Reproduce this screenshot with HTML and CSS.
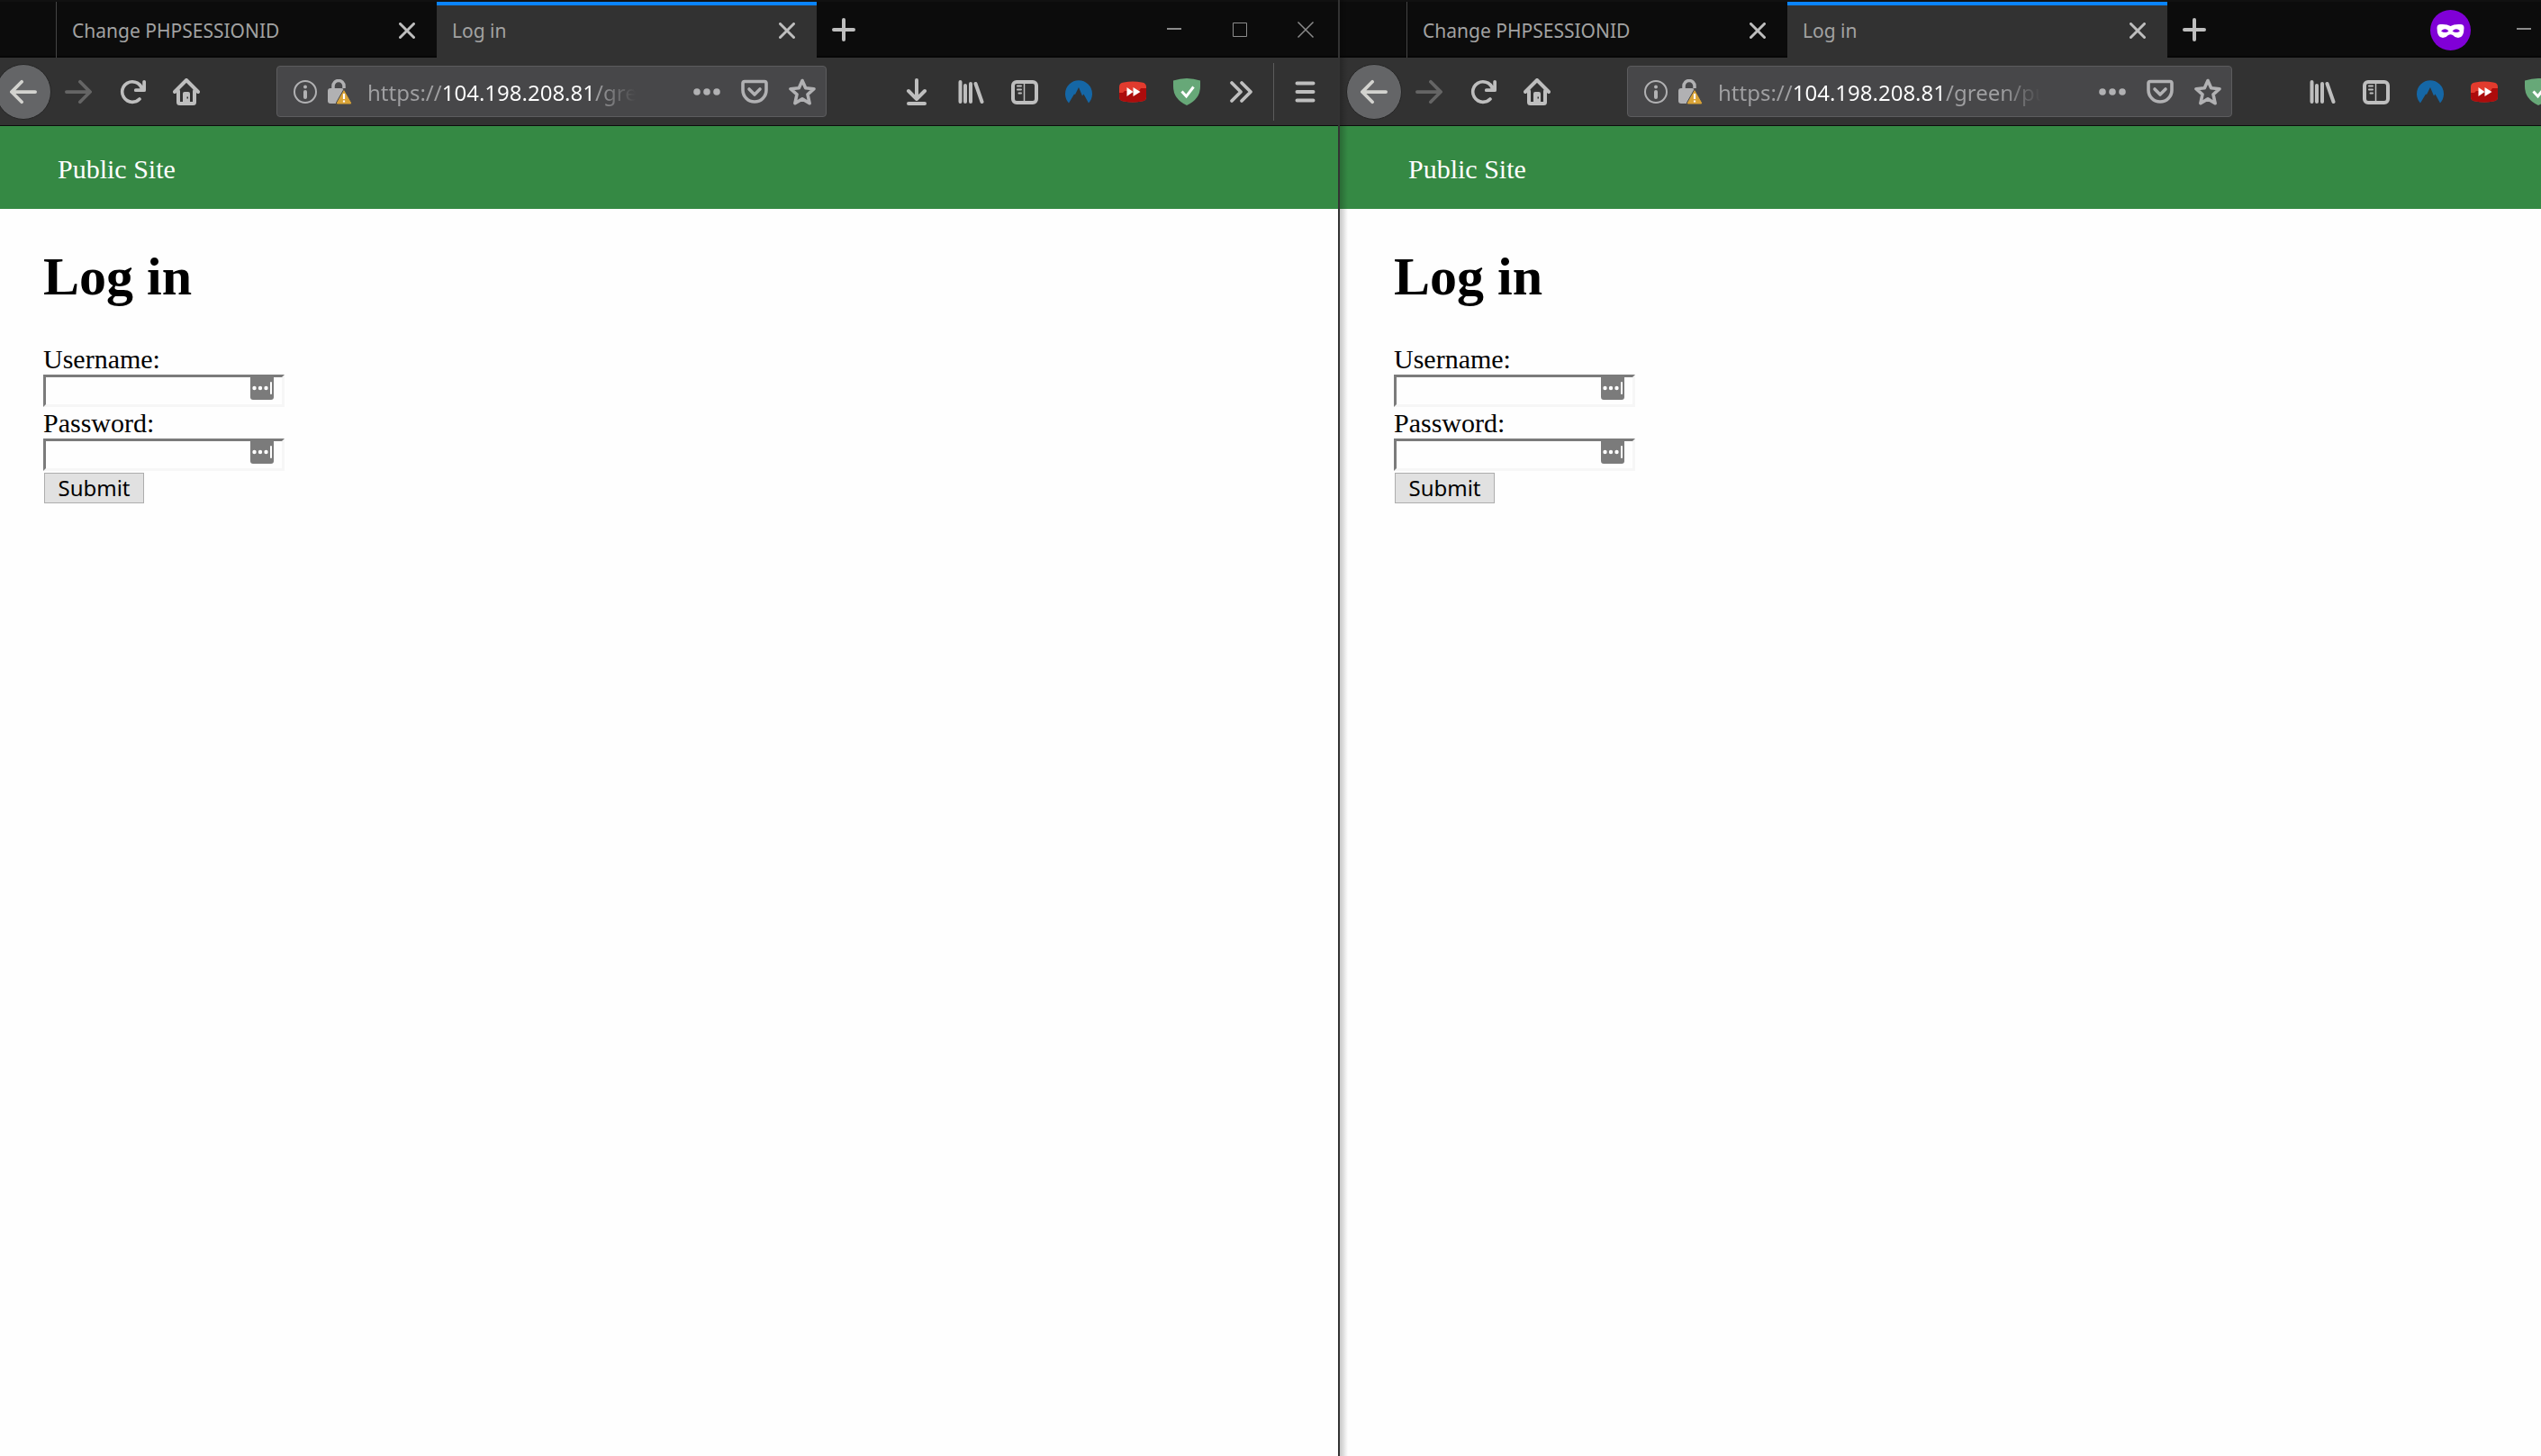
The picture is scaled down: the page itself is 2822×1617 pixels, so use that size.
FILE: index.html
```html
<!DOCTYPE html>
<html lang="en">
<head>
<meta charset="utf-8">
<title>Log in</title>
<link rel="stylesheet" href="styles.css">
</head>
<body>
<svg class="sprite" aria-hidden="true">
  <symbol id="close" viewBox="0 0 18 18"><path d="M1.5 1.5l15 15M16.5 1.5l-15 15" fill="none" stroke="currentColor" stroke-width="3" stroke-linecap="round"/></symbol>
  <symbol id="plus" viewBox="0 0 26 26"><path d="M13 2v22M2 13h22" fill="none" stroke="currentColor" stroke-width="4" stroke-linecap="round"/></symbol>
  <symbol id="back" viewBox="0 0 16 16"><path fill="currentColor" d="M15 7H3.414l4.293-4.293a1 1 0 0 0-1.414-1.414l-6 6a1 1 0 0 0 0 1.414l6 6a1 1 0 0 0 1.414-1.414L3.414 9H15a1 1 0 0 0 0-2z"/></symbol>
  <symbol id="forward" viewBox="0 0 16 16"><path fill="currentColor" d="M15.707 7.293l-6-6a1 1 0 0 0-1.414 1.414L12.586 7H1a1 1 0 0 0 0 2h11.586l-4.293 4.293a1 1 0 1 0 1.414 1.414l6-6a1 1 0 0 0 0-1.414z"/></symbol>
  <symbol id="reload" viewBox="0 0 16 16"><path fill="currentColor" d="M15 1a1 1 0 0 0-1 1v2.418A6.995 6.995 0 1 0 8 15a6.954 6.954 0 0 0 4.95-2.05 1 1 0 0 0-1.414-1.414A5.019 5.019 0 1 1 12.549 6H10a1 1 0 0 0 0 2h5a1 1 0 0 0 1-1V2a1 1 0 0 0-1-1z"/></symbol>
  <symbol id="home" viewBox="0 0 30 30"><path d="M2 15L15 2l13 13M6 14v12.500q0 1.500 1.500 1.500h15q1.500 0 1.500-1.500V14" fill="none" stroke="currentColor" stroke-width="4" stroke-linecap="round" stroke-linejoin="round"/><path d="M11 28v-11q0-2 2-2h4q2 0 2 2v11z" fill="currentColor"/><path d="M15.500 20.500h1.500v2h-1.500z" fill="#323232"/></symbol>
  <symbol id="info" viewBox="0 0 26 26"><circle cx="13" cy="13" r="12" fill="none" stroke="currentColor" stroke-width="2"/><circle cx="13" cy="7.500" r="2" fill="currentColor"/><path d="M13 13v6" stroke="currentColor" stroke-width="4" stroke-linecap="round"/></symbol>
  <symbol id="lock" viewBox="0 0 27 28"><path d="M6 12V7.500a6 6 0 0 1 12 0V10" fill="none" stroke="currentColor" stroke-width="3.500"/><rect y="10" width="18" height="17" rx="3" fill="currentColor"/><path d="M18 11L26.500 26q.6 2-1.500 2h-14q-2.100 0-1.500-2z" fill="#d9a336" stroke="#474749" stroke-width="1"/><path d="M18 16v6M18 23.500v2" stroke="#fff" stroke-width="2.200"/></symbol>
  <symbol id="dots" viewBox="0 0 30 30"><g fill="currentColor"><circle cx="4" cy="15" r="3.800"/><circle cx="15" cy="15" r="3.800"/><circle cx="26" cy="15" r="3.800"/></g></symbol>
  <symbol id="pocket" viewBox="0 0 30 30"><path d="M4 3.500h22q2 0 2 2V13a13 13 0 0 1-26 0V5.500q0-2 2-2z" fill="none" stroke="currentColor" stroke-width="3.600"/><path d="M9 12l6 6 6-6" fill="none" stroke="currentColor" stroke-width="3.600" stroke-linecap="round" stroke-linejoin="round"/></symbol>
  <symbol id="star" viewBox="0 0 30 30"><path d="M15 2.500l3.700 8.300 9.300.9-7 6.100 2.100 9.900L15 22.900l-8.100 4.800L9 17.800l-7-6.100 9.300-.9z" fill="none" stroke="currentColor" stroke-width="3.600" stroke-linejoin="round"/></symbol>
  <symbol id="download" viewBox="0 0 30 30"><path d="M15 2v21M6 14l9 9 9-9M6 28h18" fill="none" stroke="currentColor" stroke-width="4" stroke-linecap="round" stroke-linejoin="round"/></symbol>
  <symbol id="library" viewBox="0 0 30 30"><path d="M3.500 4v22M9 8v18M15 6v20M20.500 6l7 20" fill="none" stroke="currentColor" stroke-width="4" stroke-linecap="round"/></symbol>
  <symbol id="sidebar" viewBox="0 0 30 30"><rect x="2" y="4" width="26" height="23" rx="4" fill="none" stroke="currentColor" stroke-width="4"/><path d="M14.500 5v21" stroke="currentColor" stroke-width="1.500"/><path d="M7 8.500h4M7 12.500h4M8.500 16.500h2.500" stroke="currentColor" stroke-width="2" stroke-linecap="round"/></symbol>
  <symbol id="peak" viewBox="0 0 30 30"><path d="M4 27.500A15 15 0 1 1 26 27.500L20.500 17.500l-1.500 2-4-9.500-4 8-1-.5z" fill="#1567a6"/></symbol>
  <symbol id="skip" viewBox="0 0 30 30"><path d="M5 4.500q10-2 20 0 5 .5 5 5v11q0 4.500-5 5-10 2-20 0-5-.5-5-5v-11q0-4.500 5-5z" fill="#e23b2e"/><path d="M0 16h4l2-2h16l2-3h6v9.500q0 4.500-5 5-10 2-20 0-5-.5-5-5z" fill="#ac0c0c"/><path d="M8.500 10l7 5-7 5zM15.500 10l8 5-8 5z" fill="#fff"/></symbol>
  <symbol id="shield" viewBox="0 0 30 30"><path d="M0 2.500Q15-2.500 30 2.500V9q0 14-15 21Q0 23 0 9z" fill="#67a878"/><path d="M9.500 14.500l5 5.500 8-10.500" fill="none" stroke="#fff" stroke-width="3"/></symbol>
  <symbol id="more" viewBox="0 0 30 30"><path d="M5 5l10 10L5 25M16 5l10 10-10 10" fill="none" stroke="currentColor" stroke-width="3.800" stroke-linecap="round" stroke-linejoin="round"/></symbol>
  <symbol id="menu" viewBox="0 0 30 30"><path d="M6.500 5.500h18M6.500 15h18M6.500 24.500h18" stroke="currentColor" stroke-width="4" stroke-linecap="round"/></symbol>
  <symbol id="min" viewBox="0 0 20 20"><path d="M2 9h16" stroke="currentColor" stroke-width="2"/></symbol>
  <symbol id="max" viewBox="0 0 20 20"><path d="M2.500 2.500h15v15h-15z" fill="none" stroke="currentColor"/></symbol>
  <symbol id="quit" viewBox="0 0 20 20"><path d="M1.500 1.500l17 17M18.500 1.500l-17 17" stroke="currentColor" stroke-width="1.500"/></symbol>
  <symbol id="mask" viewBox="0 0 45 45"><circle cx="22.500" cy="22.500" r="22.500" fill="#8000d7"/><path fill-rule="evenodd" fill="#fff" d="M7.500 20q0-4 4-4 7-.5 11 2 4-2.500 11-2 4 0 4 4 0 11-6.500 11-3.500 0-6-3-2.500-1.500-5 0-2.500 3-6 3-6.500 0-6.500-11zM12 23.500q4.500 3 8.500 0-4-4.500-8.500 0zM24.500 23.500q4.500 3 8.500 0-4-4.500-8.500 0z"/></symbol>
  <symbol id="vault" viewBox="0 0 26 25"><path d="M0 0h26v22q0 3-3 3H3q-3 0-3-3z" fill="#7b7b7b"/><g fill="#fff"><circle cx="4.500" cy="12" r="2.200"/><circle cx="11" cy="12" r="2.200"/><circle cx="17.500" cy="12" r="2.200"/></g><path d="M23 6v12" stroke="#fff" stroke-width="2" stroke-linecap="round"/></symbol>
</svg>

<div class="desktop">
  <section class="window">
    <header class="chrome">
      <div class="tabstrip">
        <div class="tab-stub"></div>
        <div class="tab"><span class="tab-title">Change PHPSESSIONID</span><button class="tab-close" aria-label="Close tab"><svg><use href="#close"/></svg></button></div>
        <div class="tab tab--active"><span class="tab-title">Log in</span><button class="tab-close" aria-label="Close tab"><svg><use href="#close"/></svg></button></div>
        <button class="tool new-tab" aria-label="New tab"><svg><use href="#plus"/></svg></button>
        <div class="caption">
          <button class="caption-button" aria-label="Minimize"><svg><use href="#min"/></svg></button>
          <button class="caption-button" aria-label="Maximize"><svg><use href="#max"/></svg></button>
          <button class="caption-button" aria-label="Close window"><svg><use href="#quit"/></svg></button>
        </div>
      </div>
      <nav class="toolbar">
        <button class="back" aria-label="Back"><svg><use href="#back"/></svg></button>
        <button class="tool tool--disabled" aria-label="Forward"><svg><use href="#forward"/></svg></button>
        <button class="tool" aria-label="Reload"><svg><use href="#reload"/></svg></button>
        <button class="tool" aria-label="Home"><svg><use href="#home"/></svg></button>
        <div class="urlbar">
          <svg class="info"><use href="#info"/></svg>
          <svg class="lock"><use href="#lock"/></svg>
          <input class="url" type="text" aria-label="Address" value="https://104.198.208.81/green/public">
          <button class="page-action" aria-label="Page actions"><svg><use href="#dots"/></svg></button>
          <button class="page-action" aria-label="Save to Pocket"><svg><use href="#pocket"/></svg></button>
          <button class="page-action" aria-label="Bookmark"><svg><use href="#star"/></svg></button>
        </div>
        <button class="tool" aria-label="Downloads"><svg><use href="#download"/></svg></button>
        <button class="tool" aria-label="Library"><svg><use href="#library"/></svg></button>
        <button class="tool" aria-label="Sidebars"><svg><use href="#sidebar"/></svg></button>
        <button class="tool" aria-label="VPN"><svg><use href="#peak"/></svg></button>
        <button class="tool" aria-label="Video enhancer"><svg><use href="#skip"/></svg></button>
        <button class="tool" aria-label="Ad blocker"><svg><use href="#shield"/></svg></button>
        <button class="tool" aria-label="More tools"><svg><use href="#more"/></svg></button>
        <button class="tool tool--menu" aria-label="Menu"><svg><use href="#menu"/></svg></button>
      </nav>
    </header>
    <nav class="site-nav"><a href="#">Public Site</a></nav>
    <main class="page">
      <h1>Log in</h1>
      <form>
        <label for="user-a">Username:</label>
        <div class="field"><input id="user-a" type="text"><svg class="vault"><use href="#vault"/></svg></div>
        <label for="pass-a">Password:</label>
        <div class="field"><input id="pass-a" type="password"><svg class="vault"><use href="#vault"/></svg></div>
        <button class="submit" type="submit">Submit</button>
      </form>
    </main>
  </section>

  <section class="window window--private">
    <header class="chrome">
      <div class="tabstrip">
        <div class="tab-stub"></div>
        <div class="tab"><span class="tab-title">Change PHPSESSIONID</span><button class="tab-close" aria-label="Close tab"><svg><use href="#close"/></svg></button></div>
        <div class="tab tab--active"><span class="tab-title">Log in</span><button class="tab-close" aria-label="Close tab"><svg><use href="#close"/></svg></button></div>
        <button class="tool new-tab" aria-label="New tab"><svg><use href="#plus"/></svg></button>
        <div class="caption">
          <svg class="private-badge"><use href="#mask"/></svg>
          <button class="caption-button" aria-label="Minimize"><svg><use href="#min"/></svg></button>
        </div>
      </div>
      <nav class="toolbar">
        <button class="back" aria-label="Back"><svg><use href="#back"/></svg></button>
        <button class="tool tool--disabled" aria-label="Forward"><svg><use href="#forward"/></svg></button>
        <button class="tool" aria-label="Reload"><svg><use href="#reload"/></svg></button>
        <button class="tool" aria-label="Home"><svg><use href="#home"/></svg></button>
        <div class="urlbar">
          <svg class="info"><use href="#info"/></svg>
          <svg class="lock"><use href="#lock"/></svg>
          <input class="url" type="text" aria-label="Address" value="https://104.198.208.81/green/public">
          <button class="page-action" aria-label="Page actions"><svg><use href="#dots"/></svg></button>
          <button class="page-action" aria-label="Save to Pocket"><svg><use href="#pocket"/></svg></button>
          <button class="page-action" aria-label="Bookmark"><svg><use href="#star"/></svg></button>
        </div>
        <button class="tool" aria-label="Library"><svg><use href="#library"/></svg></button>
        <button class="tool" aria-label="Sidebars"><svg><use href="#sidebar"/></svg></button>
        <button class="tool" aria-label="VPN"><svg><use href="#peak"/></svg></button>
        <button class="tool" aria-label="Video enhancer"><svg><use href="#skip"/></svg></button>
        <button class="tool" aria-label="Ad blocker"><svg><use href="#shield"/></svg></button>
      </nav>
    </header>
    <nav class="site-nav"><a href="#">Public Site</a></nav>
    <main class="page">
      <h1>Log in</h1>
      <form>
        <label for="user-b">Username:</label>
        <div class="field"><input id="user-b" type="text"><svg class="vault"><use href="#vault"/></svg></div>
        <label for="pass-b">Password:</label>
        <div class="field"><input id="pass-b" type="password"><svg class="vault"><use href="#vault"/></svg></div>
        <button class="submit" type="submit">Submit</button>
      </form>
    </main>
  </section>
</div>
</body>
</html>
```
FILE: styles.css
```css
* {
  box-sizing: border-box;
}

body {
  margin: 0;
  background: #fefefe;
  color: #000;
  font: 30px/35px "Liberation Serif", serif;
}

button {
  margin: 0;
  padding: 0;
  border: 0;
  background: none;
  color: inherit;
}

svg {
  display: block;
  flex: none;
}

.sprite {
  position: absolute;
  width: 0;
  height: 0;
}

.desktop {
  display: grid;
  grid-template-columns: minmax(0, 1488fr) minmax(0, 1334fr);
  min-height: 100vh;
}

.window {
  --inset: 0px;
  overflow: hidden;
  border-right: 2px solid #333;
}

/* The private window runs past the right edge of the screen. */
.window--private {
  --inset: 12px;
  position: relative;
  border-right: 0;
}

.window--private .chrome {
  margin-right: -27px;
}

.window--private::before {
  content: "";
  position: absolute;
  inset: 0 auto 0 0;
  width: 9px;
  background: linear-gradient(90deg, rgba(0, 0, 0, .22), transparent);
}

.chrome {
  color: #bebebe;
  font-family: "Noto Sans", sans-serif;
}

.tabstrip {
  display: flex;
  height: 64px;
  padding-left: var(--inset);
  border-top: 2px solid #111;
  background: #0c0c0c;
  box-shadow: inset 0 -2px #060606;
}

.tab-stub {
  flex: none;
  width: 63px;
  border-right: 1px solid #444;
}

.tab {
  display: flex;
  flex: 0 1 422px;
  align-items: center;
  justify-content: space-between;
  min-width: 0;
  padding: 2px 24px 0 17px;
}

.tab--active {
  padding: 0 24px 2px 17px;
  border-top: 4px solid #0a84ff;
  background: #323232;
}

.tab-title {
  color: #a2a2a2;
  font-size: 21px;
  line-height: 30px;
  white-space: nowrap;
}

.tab-close svg {
  width: 18px;
  height: 18px;
}

.tool {
  display: flex;
  flex: none;
  align-items: center;
  justify-content: center;
  width: 60px;
}

.tool svg {
  width: 30px;
  height: 30px;
}

.new-tab svg {
  width: 26px;
  height: 26px;
}

.caption {
  display: flex;
  align-items: center;
  margin-left: auto;
  color: #8c8c8c;
}

.caption-button {
  display: grid;
  place-items: center;
  width: 73px;
  height: 60px;
}

.caption-button svg {
  width: 20px;
  height: 20px;
}

.private-badge {
  width: 45px;
  height: 45px;
  margin-right: 22px;
}

.window--private .caption {
  margin-right: 10px;
}

.toolbar {
  display: flex;
  align-items: center;
  height: 76px;
  padding-left: var(--inset);
  border-bottom: 1px solid #0c0c0c;
  background: #323232;
}

.back {
  display: grid;
  flex: none;
  place-items: center;
  width: 62px;
  height: 62px;
  margin-left: -5px;
  border: 1px solid #252525;
  border-radius: 50%;
  background: #646567;
  color: #d3d3cf;
}

.back svg {
  width: 30px;
  height: 30px;
}

.tool--disabled {
  color: #656565;
}

.urlbar {
  display: flex;
  flex: 1;
  align-items: center;
  min-width: 0;
  height: 57px;
  margin: 0 70px;
  padding-left: 18px;
  border: 1px solid #5c5c5e;
  border-radius: 4px;
  background: #474749;
  color: #b1b1b3;
}

.info {
  width: 26px;
  height: 26px;
  margin-right: 12px;
}

.lock {
  width: 27px;
  height: 28px;
}

/* The host is lit, the rest of the address is dim and fades out at the end. */
.url {
  flex: 1;
  min-width: 0;
  height: 40px;
  margin: 2px 52px 0 17px;
  padding: 0;
  border: 0;
  outline: 0;
  background: linear-gradient(90deg, #a0a0a2 84px, #fff 84px 250px, #a0a0a2 250px calc(100% - 44px), transparent);
  background-clip: text;
  color: transparent;
  font: 24px/34px "Noto Sans", sans-serif;
}

.page-action {
  display: grid;
  flex: none;
  place-items: center;
  width: 53px;
  height: 53px;
}

.page-action svg {
  width: 30px;
  height: 30px;
}

.tool--menu {
  width: 72px;
  height: 64px;
  margin-left: 6px;
  padding-right: 4px;
  border-left: 1px solid #5c5c5c;
}

.site-nav {
  padding: 31px 64px 27px calc(var(--inset) + 64px);
  background: #358944;
  line-height: 34px;
}

.site-nav a {
  color: #fff;
  text-decoration: none;
}

.page {
  padding: 41px 48px 48px calc(var(--inset) + 48px);
}

h1 {
  margin: 0 0 40px;
  font-size: 60px;
  line-height: 68px;
}

label {
  display: block;
}

.field {
  position: relative;
  width: 268px;
}

.field input {
  display: block;
  width: 100%;
  height: 36px;
  padding: 0 42px 0 4px;
  border: 3px solid;
  border-color: #7b7b7b #f6f6f6 #f6f6f6 #7b7b7b;
  border-radius: 0;
  outline: 0;
  background: #fefefe;
  font-size: 24px;
}

.vault {
  position: absolute;
  top: 3px;
  right: 12px;
  width: 26px;
  height: 25px;
}

.submit {
  width: 111px;
  height: 34px;
  margin: 0 1px;
  border: 1px solid #adadad;
  background: #e1e1e1;
  color: #000;
  font: 24px/30px "Noto Sans", sans-serif;
}
```
